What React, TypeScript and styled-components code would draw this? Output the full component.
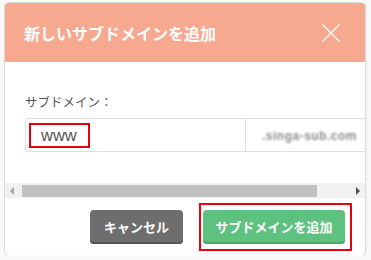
import styled, { createGlobalStyle } from 'styled-components';

const GlobalStyle = createGlobalStyle`
  html, body {
    margin: 0;
    padding: 0;
    background: #fafafa;
    font-family: "Liberation Sans", "Noto Sans CJK JP", sans-serif;
  }
`;

function App() {
  return (
    <>
      <GlobalStyle />
      <Modal>
        <Header>
          <Title>新しいサブドメインを追加</Title>
          <CloseButton aria-label="閉じる">
            <svg width="18" height="18" viewBox="0 0 18 18">
              <path d="M0.5 0.5 L17.5 17.5 M17.5 0.5 L0.5 17.5" stroke="#fff" strokeWidth="1.3" fill="none" />
            </svg>
          </CloseButton>
        </Header>
        <Body>
          <Label>サブドメイン：</Label>
          <InputGroup>
            <InputCell $width={220}>
              <Highlight>www</Highlight>
            </InputCell>
            <DomainCell>
              <Blurred>.singa-sub.com</Blurred>
            </DomainCell>
          </InputGroup>
        </Body>
        <ScrollTrack>
          <ArrowButton>
            <Triangle $dir="left" />
          </ArrowButton>
          <Thumb />
          <TrackSpace />
          <ArrowButton>
            <Triangle $dir="right" />
          </ArrowButton>
        </ScrollTrack>
        <Footer>
          <Button $variant="cancel">キャンセル</Button>
          <Marked>
            <Button $variant="primary">サブドメインを追加</Button>
          </Marked>
        </Footer>
      </Modal>
    </>
  );
}

export default App;

const Modal = styled.div`
  margin: 3px 0 0 5px;
  width: 360px;
  height: 252px;
  background: #fff;
  border-radius: 4px;
  box-shadow: 0 0 0 1px #dcdcdc, 1px 1px 2px rgba(0, 0, 0, 0.15);
  overflow: hidden;
  display: flex;
  flex-direction: column;
`;

const Header = styled.div`
  height: 59px;
  flex-shrink: 0;
  background: #f7a98f;
  display: flex;
  align-items: center;
  justify-content: space-between;
  padding: 0 25px 0 19px;
`;

const Title = styled.h2`
  margin: 0;
  color: #fff;
  font-size: 16px;
  font-weight: bold;
  font-family: "Noto Sans CJK JP", sans-serif;
  line-height: 20px;
`;

const CloseButton = styled.button`
  border: 0;
  padding: 0;
  background: none;
  width: 18px;
  height: 18px;
  display: flex;
  cursor: pointer;
`;

const Body = styled.div`
  padding: 31px 0 31px 20px;
  overflow: hidden;
  white-space: nowrap;
`;

const Label = styled.div`
  font-family: "Noto Sans CJK JP", sans-serif;
  font-size: 12.5px;
  line-height: 18px;
  color: #555;
  margin-bottom: 7px;
`;

const InputGroup = styled.div`
  display: flex;
  width: 380px;
  height: 34px;
  box-sizing: border-box;
  border: 1px solid #dedede;
  border-radius: 3px;
  background: #fff;
`;

const InputCell = styled.div<{ $width: number }>`
  width: ${(p) => p.$width - 1}px;
  flex-shrink: 0;
  padding: 4px 0 0 3px;
  box-sizing: border-box;
`;

const Highlight = styled.div`
  width: 61px;
  height: 25px;
  box-sizing: border-box;
  border: 2px solid #e8000b;
  padding-left: 10px;
  font-size: 16.5px;
  line-height: 21px;
  color: #555;
`;

const DomainCell = styled.div`
  flex: 1;
  border-left: 1px solid #dedede;
  display: flex;
  align-items: center;
  padding: 2px 0 0 16px;
`;

const Blurred = styled.span`
  font-size: 12px;
  font-weight: bold;
  color: #8c8c8c;
  filter: blur(1.2px);
  letter-spacing: 0.5px;
`;

const ScrollTrack = styled.div`
  height: 15px;
  flex-shrink: 0;
  background: #f1f1f1;
  display: flex;
`;

const ArrowButton = styled.div`
  width: 17px;
  display: flex;
  align-items: center;
  justify-content: center;
`;

const Triangle = styled.span<{ $dir: 'left' | 'right' }>`
  width: 0;
  height: 0;
  border-top: 4px solid transparent;
  border-bottom: 4px solid transparent;
  ${(p) =>
    p.$dir === 'left'
      ? 'border-right: 4px solid #a3a3a3; margin-right: 3px;'
      : 'border-left: 4px solid #505050; margin-left: 2px;'}
`;

const Thumb = styled.div`
  width: 295px;
  margin: 2px 0 1px;
  background: #c1c1c1;
`;

const TrackSpace = styled.div`
  flex: 1;
`;

const Footer = styled.div`
  display: flex;
  justify-content: flex-end;
  align-items: center;
  gap: 16px;
  padding: 5px 13px 4px 0;
`;

const Marked = styled.div`
  border: 2px solid #e8000b;
  padding: 5px 5px 5px 2px;
  display: flex;
`;

const Button = styled.button<{ $variant: 'cancel' | 'primary' }>`
  height: 34px;
  width: ${(p) => (p.$variant === 'cancel' ? 93 : 142)}px;
  border: 0;
  border-radius: 4px;
  font-family: "Noto Sans CJK JP", sans-serif;
  font-size: 13px;
  font-weight: bold;
  color: #fff;
  cursor: pointer;
  background: ${(p) => (p.$variant === 'cancel' ? '#6e6e6e' : '#5fc180')};
  box-shadow: inset 0 -2px 0 ${(p) => (p.$variant === 'cancel' ? '#555' : '#47a867')};
  padding: 0 0 2px;
`;
